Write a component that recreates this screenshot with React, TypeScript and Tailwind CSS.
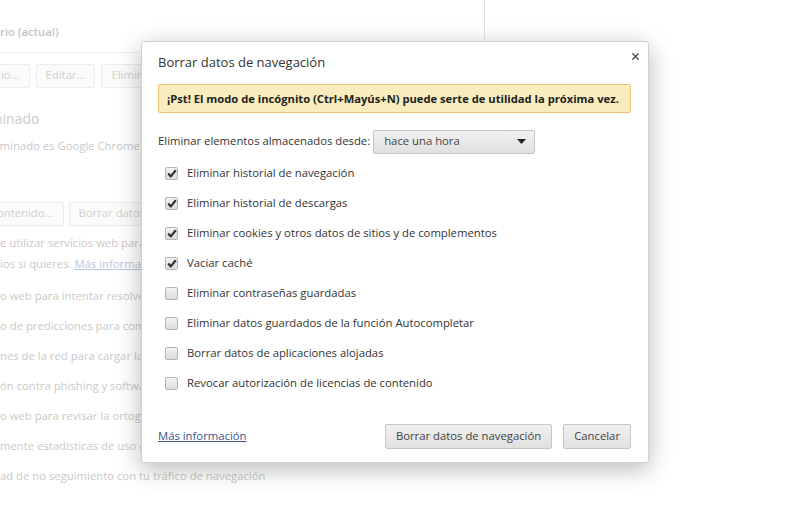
import { X } from "lucide-react";

const font = { fontFamily: '"Open Sans", "Noto Sans", sans-serif' };

const items = [
  { label: "Eliminar historial de navegación", checked: true },
  { label: "Eliminar historial de descargas", checked: true },
  { label: "Eliminar cookies y otros datos de sitios y de complementos", checked: true },
  { label: "Vaciar caché", checked: true },
  { label: "Eliminar contraseñas guardadas", checked: false },
  { label: "Eliminar datos guardados de la función Autocompletar", checked: false },
  { label: "Borrar datos de aplicaciones alojadas", checked: false },
  { label: "Revocar autorización de licencias de contenido", checked: false },
];

const bgRows = [
  "o web para intentar resolver errores de navegación",
  "o de predicciones para completar búsquedas",
  "nes de la red para cargar las páginas más rápido",
  "ón contra phishing y software malicioso",
  "o web para revisar la ortografía",
  "mente estadísticas de uso e informes de errores",
  "ad de no seguimiento con tu tráfico de navegación",
];

const Checkbox = ({ checked }: { checked: boolean }) => (
  <span className="flex h-[13px] w-[13px] shrink-0 items-center justify-center rounded-[2px] border border-[#b4b4b4] bg-gradient-to-b from-[#f2f2f2] to-[#dcdcdc]">
    {checked && (
      <svg width="10" height="9" viewBox="0 0 10 9">
        <path d="M1.2 4.6 L3.8 7.4 L8.8 1.2" fill="none" stroke="#333" strokeWidth="2.2" strokeLinejoin="round" />
      </svg>
    )}
  </span>
);

const GhostButton = ({ children, className = "" }: { children: React.ReactNode; className?: string }) => (
  <span className={`flex h-[24px] items-center rounded-[2px] border border-[#ececec] bg-[#fbfbfb] px-[9px] text-[#d0d0d0] ${className}`}>
    {children}
  </span>
);

export default function App() {
  return (
    <div className="relative flex h-[518px] w-[809px] overflow-hidden bg-white" style={font}>
      {/* faded settings page behind */}
      <div className="h-full w-[484px] shrink-0 overflow-hidden text-[11.3px] text-[#c9c9c9]">
        <div className="border-b border-[#f1f1f1] pb-[11px] pt-[24px] font-semibold text-[#c4c4c4]">rio (actual)</div>
        <div className="mt-[11px] flex gap-[6px]">
          <GhostButton className="-ml-[12px] pl-[12px]">io...</GhostButton>
          <GhostButton>Editar...</GhostButton>
          <GhostButton>Eliminar...</GhostButton>
        </div>
        <div className="-ml-[6px] mt-[20px] text-[14px] text-[#cdcdcd]">ninado</div>
        <div className="-ml-[5px] mt-[9px]">rminado es Google Chrome.</div>
        <div className="mt-[47px] flex gap-[5px]">
          <GhostButton className="-ml-[12px] pl-[8px]">ontenido...</GhostButton>
          <GhostButton>Borrar datos de navegación...</GhostButton>
        </div>
        <div className="mt-[6px] leading-[21px]">
          <div>e utilizar servicios web para ayudarte a corregir errores de navegación</div>
          <div>
            ios si quieres.{" "}
            <span className="text-[#b9c6e0] underline">Más información</span>
          </div>
        </div>
        <div className="mt-[7px] leading-[30px]">
          {bgRows.map((r) => (
            <div key={r} className="whitespace-nowrap">{r}</div>
          ))}
        </div>
      </div>
      {/* divider at the right of the settings column */}
      <div className="h-[120px] w-px bg-[#e4e4e4]" />

      {/* dialog layer */}
      <div className="absolute inset-0 pl-[141px] pt-[41px]">
        <div className="relative w-[508px] rounded-[3px] border border-[#d0d0d0] bg-white pb-[13px] pl-[16px] pr-[17px] pt-[11px] text-[11.3px] text-[#333] shadow-[0_6px_24px_rgba(0,0,0,0.28)]">
          <button className="absolute right-[5px] top-[6px] flex h-[16px] w-[16px] items-center justify-center text-[#555]">
            <X size={11} strokeWidth={3.2} />
          </button>
          <div className="text-[13px] text-[#333]">Borrar datos de navegación</div>
          <div className="mt-[11px] h-[29px] whitespace-nowrap rounded-[2px] border border-[#f0c36d] bg-[#f9edbe] px-[8px] text-[11.2px] font-bold leading-[27px] text-[#222]">
            ¡Pst! El modo de incógnito (Ctrl+Mayús+N) puede serte de utilidad la próxima vez.
          </div>
          <div className="mt-[17px] flex items-center">
            <span>Eliminar elementos almacenados desde:</span>
            <div className="ml-[3px] flex h-[24px] w-[162px] items-center justify-between rounded-[2px] border border-[#c3c3c3] bg-gradient-to-b from-[#f1f1f1] to-[#e0e0e0] pl-[10px] pr-[8px] text-[#444]">
              <span>hace una hora</span>
              <svg width="9" height="5" viewBox="0 0 9 5">
                <path d="M0 0 H9 L4.5 5 Z" fill="#222" />
              </svg>
            </div>
          </div>
          <div className="mt-[5px] flex flex-col pl-[7px]">
            {items.map((it) => (
              <label key={it.label} className="flex h-[30px] items-center gap-[9px]">
                <Checkbox checked={it.checked} />
                <span>{it.label}</span>
              </label>
            ))}
          </div>
          <div className="mt-[25px] flex items-center justify-between">
            <a className="text-[#3a5590] underline">Más información</a>
            <div className="flex gap-[11px]">
              <button className="h-[25px] rounded-[2px] border border-[#c6c6c6] bg-gradient-to-b from-[#f1f1f1] to-[#e0e0e0] px-[10px] text-[#444]">
                Borrar datos de navegación
              </button>
              <button className="h-[25px] rounded-[2px] border border-[#c6c6c6] bg-gradient-to-b from-[#f1f1f1] to-[#e0e0e0] px-[10px] text-[#444]">
                Cancelar
              </button>
            </div>
          </div>
        </div>
      </div>
    </div>
  );
}
